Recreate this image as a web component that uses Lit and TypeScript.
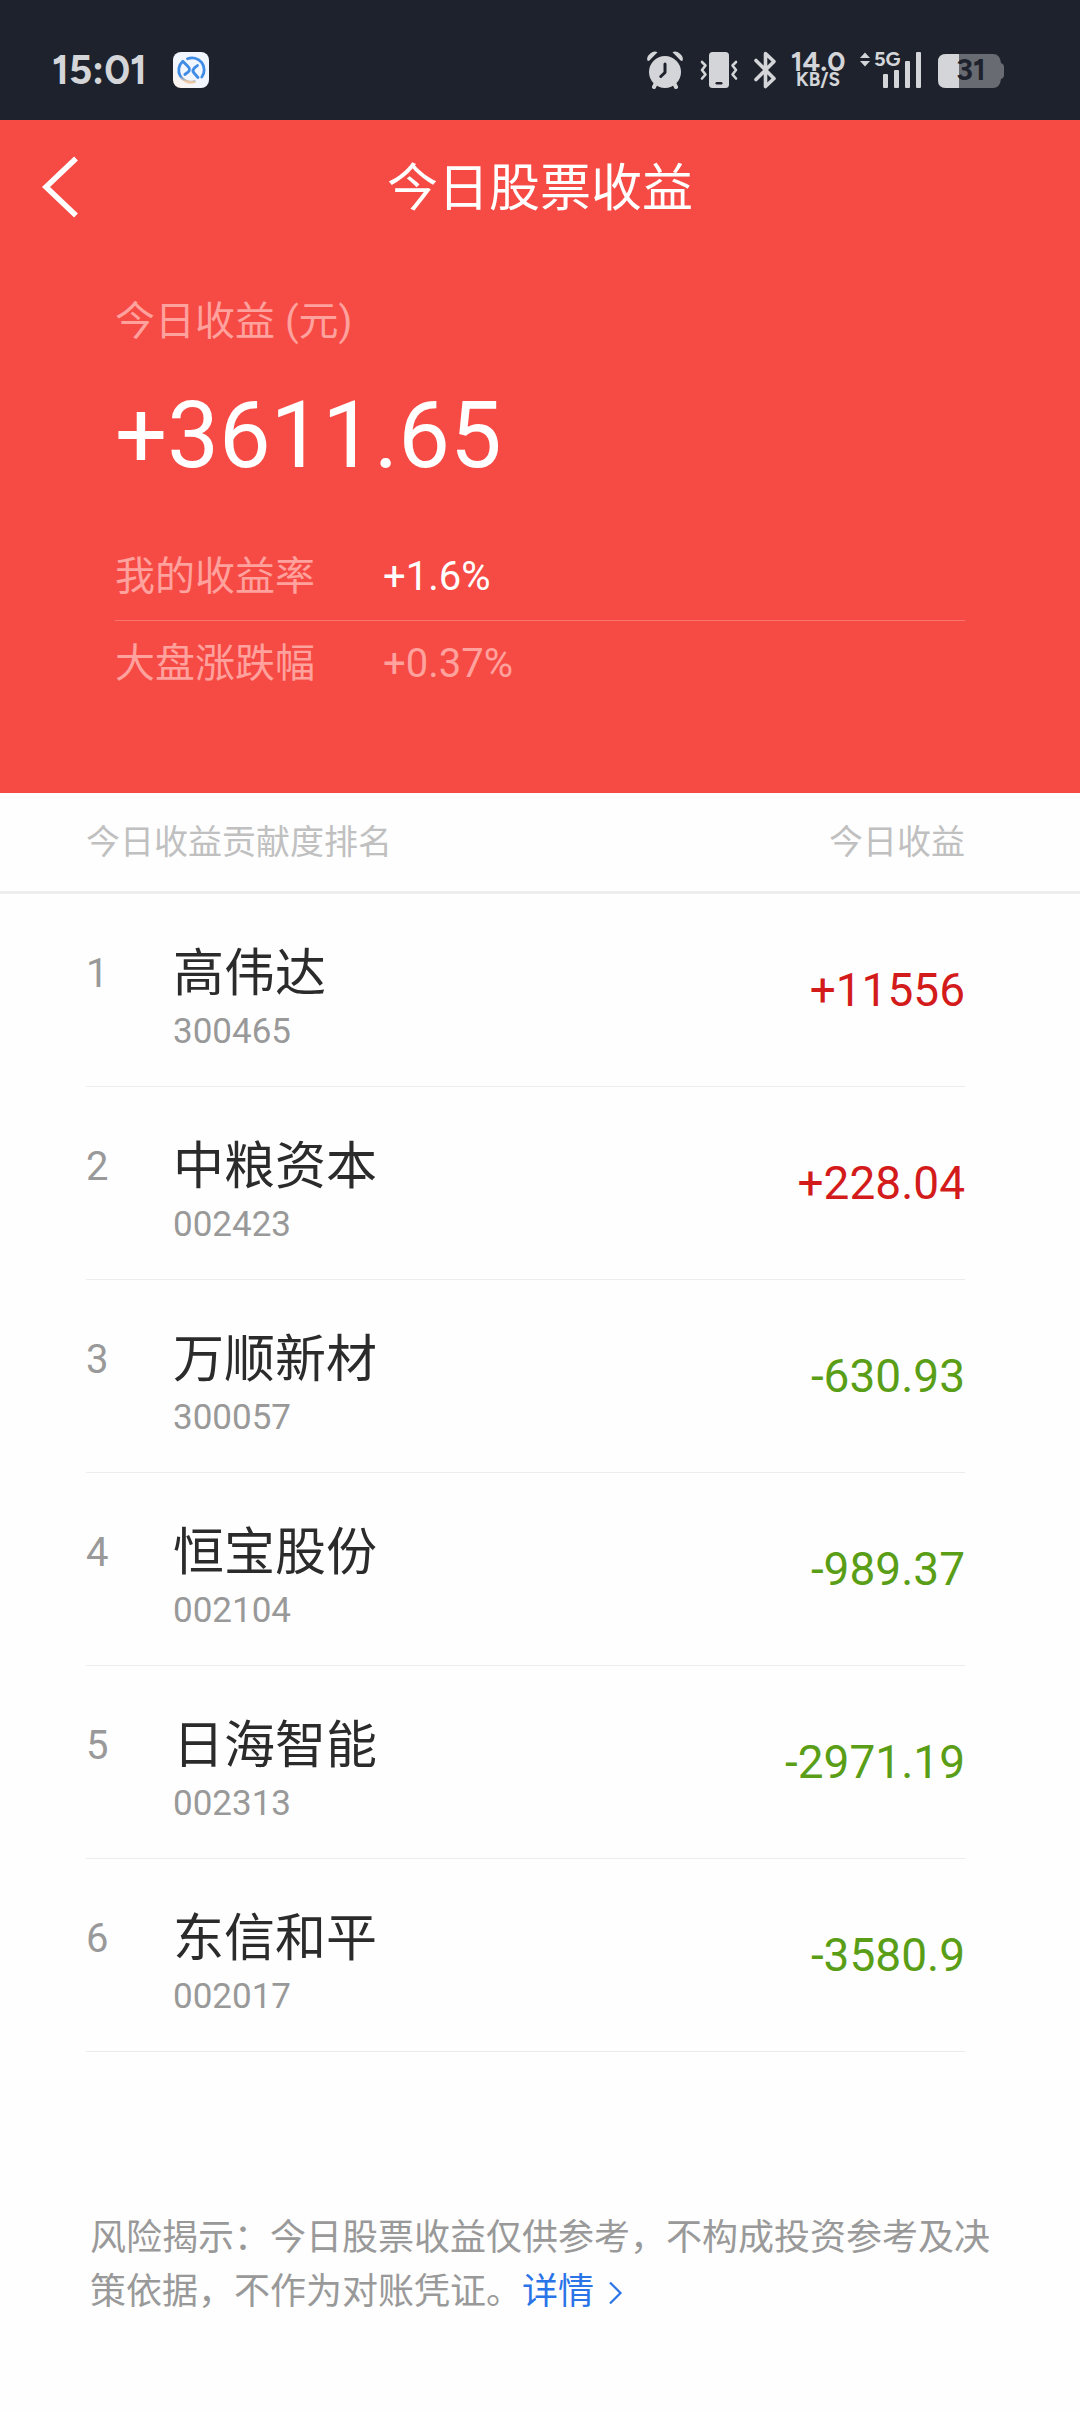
import { LitElement, html, css } from "lit";
import { customElement, property } from "lit/decorators.js";
import { classMap } from "lit/directives/class-map.js";

interface Holding {
  name: string;
  code: string;
  profit: string;
}

const HOLDINGS: Holding[] = [
  { name: "高伟达", code: "300465", profit: "+11556" },
  { name: "中粮资本", code: "002423", profit: "+228.04" },
  { name: "万顺新材", code: "300057", profit: "-630.93" },
  { name: "恒宝股份", code: "002104", profit: "-989.37" },
  { name: "日海智能", code: "002313", profit: "-2971.19" },
  { name: "东信和平", code: "002017", profit: "-3580.9" },
];

@customElement("status-bar")
export class StatusBar extends LitElement {
  static styles = css`
    :host {
      display: flex;
      align-items: center;
      justify-content: space-between;
      height: 120px;
      padding: 20px 76px 0 52px;
      box-sizing: border-box;
      background: #1e222c;
      color: #d3d5d8;
      font-family: Figtree, Inter, sans-serif;
      font-weight: 700;
    }
    .side {
      display: flex;
      align-items: center;
    }
    .left {
      gap: 26px;
    }
    .right {
      gap: 16px;
    }
    .time {
      font-size: 40px;
      line-height: 40px;
    }
    svg {
      display: block;
    }
    .speed {
      display: flex;
      flex-direction: column;
      align-items: center;
      width: 52px;
    }
    .rate {
      font-size: 28px;
      line-height: 20px;
    }
    .unit {
      font-size: 19px;
      line-height: 18px;
    }
    .signal,
    .battery {
      position: relative;
    }
    .network {
      position: absolute;
      left: 14px;
      top: 0;
      font-size: 20px;
      line-height: 16px;
    }
    .level {
      position: absolute;
      inset: 0;
      text-align: center;
      font-size: 30px;
      line-height: 38px;
      color: #1e222c;
    }
  `;

  render() {
    return html`
      <div class="side left">
        <span class="time">15:01</span>
        <svg width="36" height="36" viewBox="0 0 36 36" aria-hidden="true">
          <defs>
            <linearGradient id="tile" x1="1" y1="0" x2="0" y2="1">
              <stop offset="0.6" stop-color="#f1f6ff" />
              <stop offset="1" stop-color="#fff3e8" />
            </linearGradient>
            <linearGradient id="ring" x1="0.7" y1="0" x2="0.6" y2="1">
              <stop offset="0.8" stop-color="#3f8ce6" />
              <stop offset="1" stop-color="#f0c9a4" />
            </linearGradient>
          </defs>
          <rect width="36" height="36" rx="8" fill="url(#tile)" />
          <g fill="none" stroke-width="2.8" stroke-linecap="round" stroke-linejoin="round">
            <path
              stroke="url(#ring)"
              d="M14.500 6.800A12 12 0 0 1 28.800 25M21.500 29.600A12 12 0 0 1 9.800 9.200L15 14.500Q18 17.500 15 20.200L11.800 22.500"
            />
            <path stroke="#3f8ce6" d="M24.500 13.500L21.200 16.200Q18.800 18.500 21 21L25 25.500" />
          </g>
        </svg>
      </div>
      <div class="side right">
        <svg width="38" height="38" viewBox="0 0 38 38" aria-hidden="true">
          <path fill="none" stroke="#d3d5d8" stroke-linecap="round" stroke-width="4" d="M10.500 31L8 36M27.500 31L30 36" />
          <circle cx="19" cy="21" r="16" fill="#d3d5d8" />
          <path
            fill="#d3d5d8"
            d="M1.500 9.500Q0 6 4 2.800Q8-.8 11.500 1.200L3.400 9.600Q2.200 10.600 1.500 9.500ZM36.500 9.500Q38 6 34 2.800Q30-.8 26.500 1.200L34.600 9.600Q35.800 10.600 36.500 9.500Z"
          />
          <path
            fill="none"
            stroke="#1e222c"
            stroke-width="3"
            stroke-linecap="round"
            stroke-linejoin="round"
            d="M19 13V21.500L14.800 25.500"
          />
        </svg>
        <svg width="38" height="38" viewBox="0 0 38 38" aria-hidden="true">
          <rect x="9" y="1" width="20" height="36" rx="3.500" fill="#d3d5d8" />
          <rect x="15.500" y="31" width="7" height="2.400" rx="1.200" fill="#1e222c" />
          <path
            fill="none"
            stroke="#d3d5d8"
            stroke-width="2.600"
            stroke-linecap="round"
            stroke-linejoin="round"
            d="M2 11L5.500 14.500L2 19L5.500 23.500L2 27.500M36 11L32.500 14.500L36 19L32.500 23.500L36 27.500"
          />
        </svg>
        <svg width="22" height="38" viewBox="1 0 22 38" aria-hidden="true">
          <path
            fill="none"
            stroke="#d3d5d8"
            stroke-width="3.600"
            stroke-linecap="round"
            stroke-linejoin="round"
            d="M3 9.500L21 27.500L12.500 35.500V2.500L21 10.500L3 28.500"
          />
        </svg>
        <div class="speed">
          <span class="rate">14.0</span>
          <span class="unit">KB/S</span>
        </div>
        <div class="signal">
          <svg width="62" height="38" viewBox="0 0 62 38" aria-hidden="true">
            <g fill="#d3d5d8">
              <path d="M0 7L5 1.500L10 7ZM0 10L5 15.500L10 10Z" />
              <rect x="23" y="23" width="5" height="14" rx="1" />
              <rect x="34" y="19" width="5" height="18" rx="1" />
              <rect x="45" y="10" width="5" height="27" rx="1" />
              <rect x="56" y="1" width="5" height="36" rx="1" />
            </g>
          </svg>
          <span class="network">5G</span>
        </div>
        <div class="battery">
          <svg width="66" height="38" viewBox="0 0 66 38" aria-hidden="true">
            <path
              fill="#686b71"
              d="M8 3H55Q62 3 63 12Q66 13 66 16V24Q66 27 63 28Q62 37 55 37H8Q0 37 0 29V11Q0 3 8 3Z"
            />
            <path fill="#d3d5d8" d="M21 3H8Q0 3 0 11V29Q0 37 8 37H21Z" />
          </svg>
          <span class="level">31</span>
        </div>
      </div>
    `;
  }
}

@customElement("profit-summary")
export class ProfitSummary extends LitElement {
  static styles = css`
    :host {
      display: block;
      background: #f64a45;
      color: #fff;
      padding-bottom: 86px;
    }
    .bar {
      display: grid;
      grid-template-columns: 120px 1fr 120px;
      align-items: center;
      height: 134px;
    }
    .back {
      display: flex;
      align-items: center;
      height: 100%;
      padding: 0 0 0 41px;
      border: 0;
      background: none;
      color: inherit;
    }
    h1 {
      margin: 0;
      padding-top: 4px;
      text-align: center;
      font-size: 51px;
      line-height: 60px;
      font-weight: 400;
    }
    .body {
      padding: 38px 115px 0;
    }
    .muted {
      color: #ffa19d;
    }
    .label {
      margin: 0;
      font-size: 40px;
      line-height: 60px;
    }
    .total {
      margin: 28px 0 42px;
      font-size: 92px;
      line-height: 112px;
    }
    .rates {
      margin: 0;
      font-size: 40px;
      line-height: 60px;
    }
    .rate {
      display: grid;
      grid-template-columns: 268px 1fr;
      padding: 13px 0;
    }
    .rate + .rate {
      border-top: 1px solid #f8766f;
    }
    dd {
      margin: 0;
    }
  `;

  render() {
    return html`
      <header class="bar">
        <button class="back" type="button" aria-label="返回">
          <svg width="40" height="62" viewBox="0 0 40 62" aria-hidden="true">
            <path fill="none" stroke="currentColor" stroke-width="5.500" d="M35 2.500L5 31L35 59.500" />
          </svg>
        </button>
        <h1>今日股票收益</h1>
      </header>
      <div class="body">
        <p class="label muted">今日收益 (元)</p>
        <p class="total">+3611.65</p>
        <dl class="rates">
          <div class="rate">
            <dt class="muted">我的收益率</dt>
            <dd>+1.6%</dd>
          </div>
          <div class="rate">
            <dt class="muted">大盘涨跌幅</dt>
            <dd class="muted">+0.37%</dd>
          </div>
        </dl>
      </div>
    `;
  }
}

@customElement("profit-ranking")
export class ProfitRanking extends LitElement {
  @property({ attribute: false }) holdings: Holding[] = [];

  static styles = css`
    :host {
      display: block;
    }
    table,
    thead,
    tbody,
    th,
    td {
      display: block;
      padding: 0;
    }
    thead,
    tbody {
      padding: 0 115px 0 86px;
    }
    thead {
      border-bottom: 3px solid #eee;
    }
    .head {
      display: flex;
      justify-content: space-between;
      padding: 24px 0;
      color: #c0c0c0;
      font-size: 34px;
      line-height: 50px;
    }
    th {
      font-weight: inherit;
      text-align: left;
    }
    .row {
      display: grid;
      grid-template-columns: 87px 1fr auto;
      padding: 50px 0 33px;
      border-bottom: 1px solid #ececec;
    }
    .rank {
      color: #999;
      font-size: 40px;
      line-height: 60px;
    }
    .stock {
      display: flex;
      flex-direction: column;
      gap: 7px;
    }
    .name {
      color: #2b2b2b;
      font-size: 51px;
      line-height: 60px;
    }
    .code {
      color: #999;
      font-size: 35px;
      line-height: 42px;
    }
    .profit {
      padding-top: 16px;
      font-size: 46px;
      line-height: 60px;
      color: #d31b1b;
    }
    .loss {
      color: #5a9e17;
    }
  `;

  render() {
    return html`
      <table>
        <thead>
          <tr class="head">
            <th scope="col">今日收益贡献度排名</th>
            <th scope="col">今日收益</th>
          </tr>
        </thead>
        <tbody>
          ${this.holdings.map(
            (item, index) => html`
              <tr class="row">
                <td class="rank">${index + 1}</td>
                <td class="stock">
                  <span class="name">${item.name}</span>
                  <span class="code">${item.code}</span>
                </td>
                <td class=${classMap({ profit: true, loss: item.profit.startsWith("-") })}>${item.profit}</td>
              </tr>
            `,
          )}
        </tbody>
      </table>
    `;
  }
}

@customElement("app-root")
export class AppRoot extends LitElement {
  static styles = css`
    :host {
      display: block;
      min-height: 100vh;
      background: #fefefe;
      font-family: Roboto, "Noto Sans CJK SC", sans-serif;
      font-weight: 400;
    }
    .notice {
      margin: 0;
      padding: 159px 85px 80px 90px;
      color: #999;
      font-size: 36px;
      line-height: 54px;
    }
    .more {
      color: #2a74e8;
      text-decoration: none;
    }
    .arrow {
      margin-left: 14px;
      vertical-align: -1px;
    }
  `;

  render() {
    return html`
      <status-bar></status-bar>
      <main>
        <profit-summary></profit-summary>
        <profit-ranking .holdings=${HOLDINGS}></profit-ranking>
        <p class="notice">
          风险揭示：今日股票收益仅供参考，不构成投资参考及决策依据，不作为对账凭证。<a class="more" href="#details"
            >详情<svg class="arrow" width="15" height="24" viewBox="0 0 15 24" aria-hidden="true">
              <path fill="none" stroke="currentColor" stroke-width="2.200" d="M2 1.500L12.500 12L2 22.500" /></svg
          ></a>
        </p>
      </main>
    `;
  }
}
